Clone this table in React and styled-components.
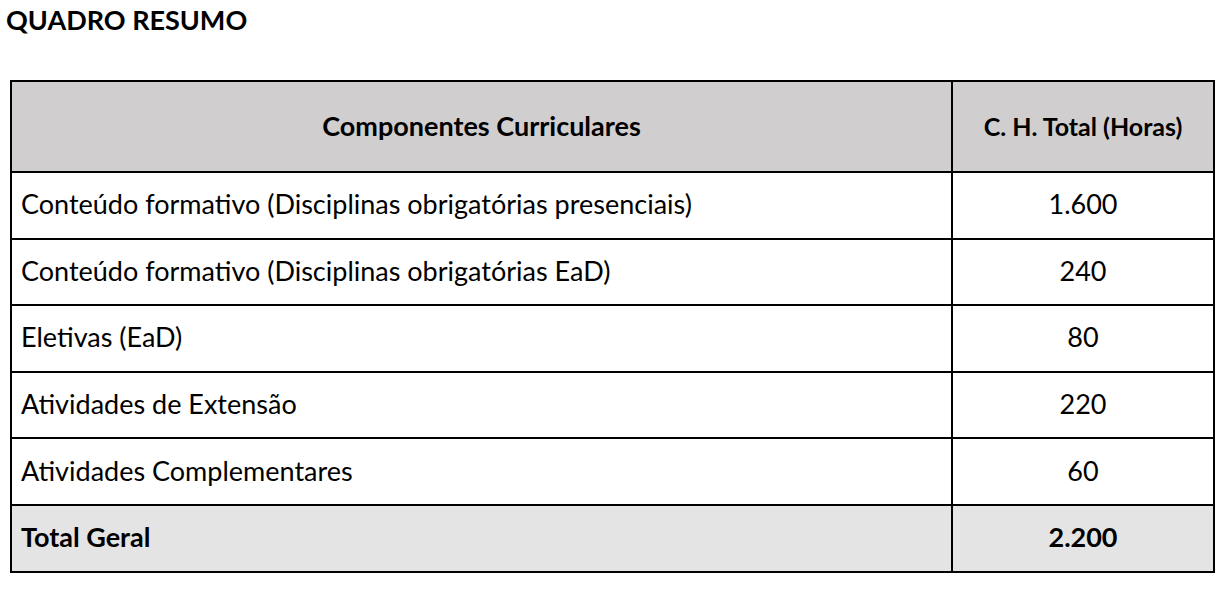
import React from 'react'
import styled, { createGlobalStyle } from 'styled-components'

const GlobalStyle = createGlobalStyle`
  body {
    margin: 0;
    background: #fff;
    font-family: Lato, "Open Sans", sans-serif;
    color: #000;
  }
`

const rows = [
  { label: 'Conteúdo formativo (Disciplinas obrigatórias presenciais)', hours: '1.600' },
  { label: 'Conteúdo formativo (Disciplinas obrigatórias EaD)', hours: '240' },
  { label: 'Eletivas (EaD)', hours: '80' },
  { label: 'Atividades de Extensão', hours: '220' },
  { label: 'Atividades Complementares', hours: '60' }
]

export default function App() {
  return (
    <Page>
      <GlobalStyle />
      <Title>QUADRO RESUMO</Title>
      <Table>
        <thead>
          <HeadRow>
            <HeadCell $width={939}>Componentes Curriculares</HeadCell>
            <HeadCell $small>C. H. Total (Horas)</HeadCell>
          </HeadRow>
        </thead>
        <tbody>
          {rows.map(row => (
            <Row key={row.label}>
              <Cell>{row.label}</Cell>
              <Cell $center>{row.hours}</Cell>
            </Row>
          ))}
          <Row $total>
            <Cell $bold>Total Geral</Cell>
            <Cell $center $bold>2.200</Cell>
          </Row>
        </tbody>
      </Table>
    </Page>
  )
}

const Page = styled.div`
  padding: 4px 0 0 10px;
  width: 1218px;
`
const Title = styled.h1`
  margin: 0 0 44px -4px;
  font-size: 27px;
  line-height: 32px;
  font-weight: 700;
  letter-spacing: 0;
`
const Table = styled.table`
  border-collapse: collapse;
  width: 1205px;
  table-layout: fixed;
  border: 2px solid #000;
`
const HeadRow = styled.tr`
  height: 91px;
  background: #d0cece;
`
const HeadCell = styled.th`
  border: 2px solid #000;
  width: ${props => props.$width ? props.$width + 'px' : 'auto'};
  font-size: ${props => props.$small ? '25px' : '27px'};
  font-weight: 700;
  text-align: center;
  padding: 0 0 2px;
`
const Row = styled.tr`
  height: 66.6px;
  background: ${props => props.$total ? '#e4e4e4' : '#fff'};
`
const Cell = styled.td`
  border: 2px solid #000;
  padding: 0 9px 3px;
  font-size: 27px;
  font-weight: ${props => props.$bold ? 700 : 400};
  text-align: ${props => props.$center ? 'center' : 'left'};
`
